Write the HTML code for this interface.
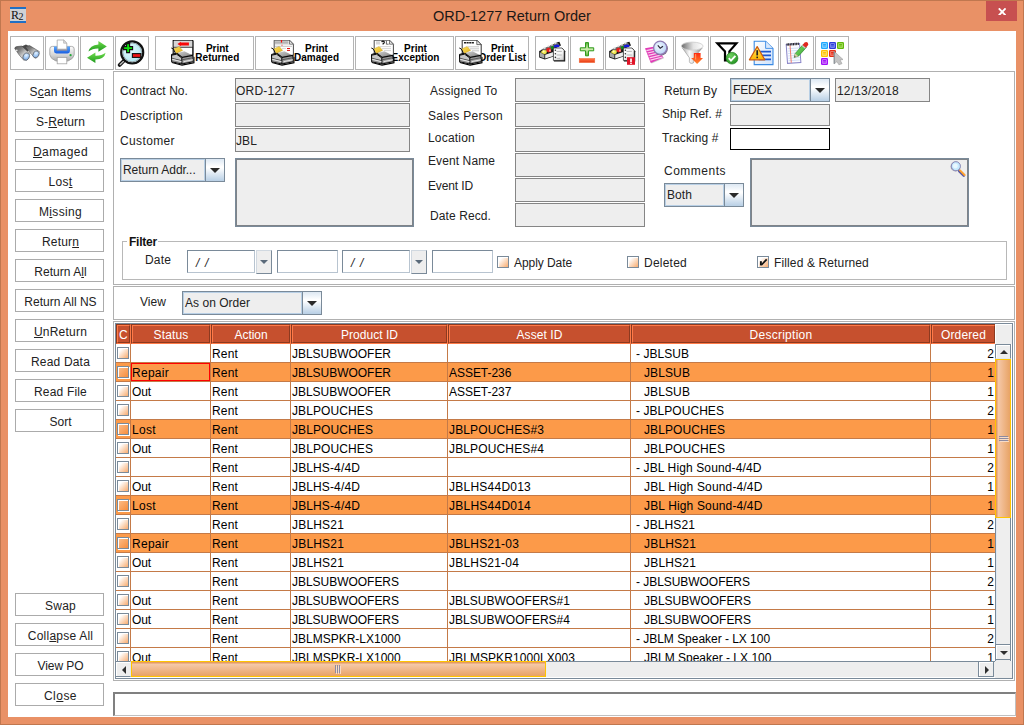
<!DOCTYPE html>
<html><head><meta charset="utf-8"><title>ORD-1277 Return Order</title>
<style>
*{box-sizing:border-box;margin:0;padding:0}
html,body{width:1024px;height:725px;overflow:hidden}
body{background:#E99166;font-family:"Liberation Sans",sans-serif;font-size:12px;color:#222;position:relative}
div,span,svg{position:absolute}
.t{white-space:pre;line-height:14px;height:14px;font-size:12px}
.btn{background:#fff;border:1px solid #ababab}
.tb{background:#fff;border:1px solid #b4b4b4}
.fld{background:#eee;border:1px solid #858585}
.ta{background:#eee;border:1px solid #7a8a99;box-shadow:inset 0 0 0 1px #7f8388}
.cb{border:1px solid #7a8a99;background:#eee}
.cb i{position:absolute;left:0;top:0;bottom:0;right:19px;border:1px solid #b8cfe5;font-style:normal}
.cb b{position:absolute;right:0;top:0;bottom:0;width:19px;border-left:1px solid #7a8a99;background:linear-gradient(#dde8f3 0%,#fff 35%,#fff 40%,#b8cfe5 100%)}
.cb b:after{content:"";position:absolute;left:4px;top:9px;border:5px solid transparent;border-top:5px solid #2a2a2a;border-bottom:0}
.ck{width:12px;height:12px;border:1px solid #7a8a99;background:linear-gradient(135deg,#fff 0%,#fff 22%,#f8ab6e 100%);box-shadow:inset 1px 1px 0 #fff,1px 1px 0 #fff}
.ck.o{background:linear-gradient(135deg,#fdc08e 0%,#f78d3c 100%)}
.hc{background:#c6502e;border-left:1px solid #8c3a20;border-top:1px solid #8c3a20;border-right:1px solid #ff7a48;border-bottom:1px solid #ff7a48}
.hc:before{content:"";position:absolute;left:0;top:0;right:0;bottom:0;border-left:1px solid #ff7a48;border-top:1px solid #ff7a48;border-right:1px solid #8c3a20;border-bottom:1px solid #8c3a20}
.ht{color:#fff}
.u{text-decoration:underline}
</style></head><body>
<div style="left:0px;top:0px;width:1024px;height:725px;border:1px solid #c0774f"></div>
<span id="title" style="left:433px;top:6px;font-size:14.5px;line-height:20px;white-space:pre;color:#1c1816">ORD-1277 Return Order</span>
<div style="left:10px;top:7px;width:16px;height:16px;background:#cfd2d6;border-top:2px solid #1f6fc4;border-bottom:2px solid #1f6fc4"></div>
<span style="left:11px;top:8px;font:12px/14px 'Liberation Serif',serif;color:#111;letter-spacing:-0.5px">R<span style="position:relative;top:1px;font-size:10px">2</span></span>
<div style="left:986px;top:1px;width:31px;height:20px;background:#c75050"></div>
<svg style="left:998px;top:7.6px" width="8.4" height="7.8" viewBox="0 0 8.4 7.8"><path d="M0.8 0.4L7.6 7.4M7.6 0.4L0.8 7.4" stroke="#fff" stroke-width="1.9"/></svg>
<div style="left:8px;top:31px;width:1008px;height:686px;background:#fff"></div>
<div class="tb" style="left:10px;top:36px;width:34px;height:34px;"></div>
<div class="tb" style="left:45px;top:36px;width:34px;height:34px;"></div>
<div class="tb" style="left:80px;top:36px;width:34px;height:34px;"></div>
<div class="tb" style="left:115px;top:36px;width:34px;height:34px;"></div>
<div class="tb" style="left:155px;top:36px;width:99px;height:34px;"></div>
<div class="tb" style="left:255px;top:36px;width:99px;height:34px;"></div>
<div class="tb" style="left:355px;top:36px;width:99px;height:34px;"></div>
<div class="tb" style="left:455px;top:36px;width:74px;height:34px;"></div>
<div class="tb" style="left:535px;top:36px;width:34px;height:34px;"></div>
<div class="tb" style="left:570px;top:36px;width:34px;height:34px;"></div>
<div class="tb" style="left:605px;top:36px;width:34px;height:34px;"></div>
<div class="tb" style="left:640px;top:36px;width:34px;height:34px;"></div>
<div class="tb" style="left:675px;top:36px;width:34px;height:34px;"></div>
<div class="tb" style="left:710px;top:36px;width:34px;height:34px;"></div>
<div class="tb" style="left:745px;top:36px;width:34px;height:34px;"></div>
<div class="tb" style="left:780px;top:36px;width:34px;height:34px;"></div>
<div class="tb" style="left:815px;top:36px;width:34px;height:34px;"></div>
<span class="t" style="left:177.3px;top:44px;width:80px;text-align:center;font-weight:bold;font-size:10px;line-height:9px;height:auto;color:#000">Print<br>Returned</span>
<span class="t" style="left:276.5px;top:44px;width:80px;text-align:center;font-weight:bold;font-size:10px;line-height:9px;height:auto;color:#000">Print<br>Damaged</span>
<span class="t" style="left:375.5px;top:44px;width:80px;text-align:center;font-weight:bold;font-size:10px;line-height:9px;height:auto;color:#000">Print<br>Exception</span>
<span class="t" style="left:462.3px;top:44px;width:80px;text-align:center;font-weight:bold;font-size:10px;line-height:9px;height:auto;color:#000">Print<br>Order List</span>
<svg width="0" height="0" style="left:0;top:0"><defs>
<linearGradient id="gBar" x1="0" y1="0" x2="1" y2="1"><stop offset="0" stop-color="#555"/><stop offset=".3" stop-color="#7c7c7c"/><stop offset=".55" stop-color="#c4c4c4"/><stop offset=".78" stop-color="#f2f2f2"/><stop offset="1" stop-color="#a0a0a0"/></linearGradient>
<radialGradient id="gLens" cx=".4" cy=".35" r=".7"><stop offset="0" stop-color="#e8f4ff"/><stop offset=".6" stop-color="#9cc4f2"/><stop offset="1" stop-color="#6a94d0"/></radialGradient>
<linearGradient id="gGreen" x1="0" y1="0" x2="0" y2="1"><stop offset="0" stop-color="#6fdc4c"/><stop offset="1" stop-color="#1d9a1d"/></linearGradient>
<linearGradient id="gPrn" x1="0" y1="0" x2="0" y2="1"><stop offset="0" stop-color="#fdfdfd"/><stop offset=".6" stop-color="#d4d4d4"/><stop offset="1" stop-color="#a8a8a8"/></linearGradient>
<linearGradient id="gBlue" x1="0" y1="0" x2="0" y2="1"><stop offset="0" stop-color="#5aa8ff"/><stop offset="1" stop-color="#1b5fe0"/></linearGradient>
<radialGradient id="gGlass" cx=".4" cy=".4" r=".7"><stop offset="0" stop-color="#e4fbff"/><stop offset="1" stop-color="#a8e2ee"/></radialGradient>
<linearGradient id="gTop" x1="0" y1="0" x2="1" y2="1"><stop offset="0" stop-color="#d4d4d4"/><stop offset="1" stop-color="#787878"/></linearGradient>
<linearGradient id="gFront" x1="0" y1="0" x2="0" y2="1"><stop offset="0" stop-color="#d8d8d8"/><stop offset="1" stop-color="#7c7c7c"/></linearGradient>
<linearGradient id="gPlus" x1="0" y1="0" x2="0" y2="1"><stop offset="0" stop-color="#58b038"/><stop offset=".5" stop-color="#d0eeb0"/><stop offset="1" stop-color="#58b038"/></linearGradient>
<linearGradient id="gMinus" x1="0" y1="0" x2="0" y2="1"><stop offset="0" stop-color="#ff7a4a"/><stop offset="1" stop-color="#e83810"/></linearGradient>
<linearGradient id="gFun" x1="0" y1="0" x2="1" y2="0"><stop offset="0" stop-color="#a8a8a8"/><stop offset=".35" stop-color="#fbfbfb"/><stop offset=".6" stop-color="#d8d8d8"/><stop offset="1" stop-color="#8e8e8e"/></linearGradient>
<linearGradient id="gFunTop" x1="0" y1="0" x2="1" y2="0"><stop offset="0" stop-color="#6a6a6a"/><stop offset=".55" stop-color="#e4e4e4"/><stop offset="1" stop-color="#fff"/></linearGradient>
<linearGradient id="gArr" x1="0" y1="0" x2="0" y2="1"><stop offset="0" stop-color="#ff2a10"/><stop offset="1" stop-color="#ff8a30"/></linearGradient>
<radialGradient id="gChk" cx=".4" cy=".3" r=".8"><stop offset="0" stop-color="#6fd060"/><stop offset="1" stop-color="#1c8c1c"/></radialGradient>
<radialGradient id="gClock" cx=".4" cy=".4" r=".7"><stop offset="0" stop-color="#f2f8ff"/><stop offset="1" stop-color="#b4d0f4"/></radialGradient>
<linearGradient id="gDoc" x1="0" y1="0" x2="1" y2="1"><stop offset="0" stop-color="#fff"/><stop offset="1" stop-color="#cfe2fa"/></linearGradient>
<linearGradient id="gWarn" x1="0" y1="0" x2="0" y2="1"><stop offset="0" stop-color="#ffe860"/><stop offset="1" stop-color="#ffb400"/></linearGradient>
<linearGradient id="gPen" x1="0" y1="0" x2="1" y2="1"><stop offset="0" stop-color="#8ae870"/><stop offset="1" stop-color="#2c9c2c"/></linearGradient>
<linearGradient id="gPaper" x1="0" y1="0" x2="1" y2="1"><stop offset="0" stop-color="#fff"/><stop offset=".6" stop-color="#f4f4f4"/><stop offset="1" stop-color="#c4c4c4"/></linearGradient>
<linearGradient id="gYel" x1="0" y1="0" x2="1" y2="1"><stop offset="0" stop-color="#f9e060"/><stop offset="1" stop-color="#e8b41c"/></linearGradient>
</defs></svg>
<svg style="left:10px;top:36px" width="34" height="34" viewBox="0 0 34 34">
<path d="M11.4 10.4L16 8.6L21.4 11.4L17.4 15.6Z" fill="#4a4a4a"/>
<path d="M4.8 12.6Q4.6 11 6.6 10.6L12 10L19.6 17.8L14 24.4Q9 19.6 4.8 12.6Z" fill="url(#gBar)" stroke="#3c3c3c" stroke-width=".5"/>
<path d="M15 10.6L19.6 9.6L29.4 15.6L25.6 22.2Q20 17.6 15 10.6Z" fill="url(#gBar)" stroke="#3c3c3c" stroke-width=".5"/>
<ellipse cx="16.2" cy="20.6" rx="3.1" ry="3.9" fill="url(#gLens)" stroke="#5a5a5a" stroke-width=".7" transform="rotate(30 16.2 20.6)"/>
<ellipse cx="26" cy="18.4" rx="2.9" ry="3.7" fill="url(#gLens)" stroke="#5a5a5a" stroke-width=".7" transform="rotate(30 26 18.4)"/>
<circle cx="6.8" cy="14.4" r=".8" fill="#eee"/></svg>
<svg style="left:45px;top:36px" width="34" height="34" viewBox="0 0 34 34">
<path d="M4.8 13Q4.8 10.4 7.4 10.4L26.6 10.4Q29.2 10.4 29.2 13L29.2 18.8Q28.6 22.8 23 25L11 25Q5.4 22.8 4.8 18.8Z" fill="url(#gPrn)" stroke="#9c9c9c" stroke-width=".8"/>
<path d="M9 10.4L25 10.4L25 15Q25 17.4 22.6 17.4L11.4 17.4Q9 17.4 9 15Z" fill="url(#gBlue)"/>
<rect x="11.8" y="12.6" width="10.4" height="2.2" fill="#8c8ca4"/>
<path d="M12.2 4L18.6 4L21.8 7.2L21.8 13.2L12.2 13.2Z" fill="#fff" stroke="#a4a4a4" stroke-width=".8"/>
<path d="M18.6 4L18.6 7.2L21.8 7.2Z" fill="#e0e0e0" stroke="#a4a4a4" stroke-width=".6"/>
<rect x="12.2" y="21.4" width="9.6" height="6.4" fill="#fff" stroke="#a4a4a4" stroke-width=".8"/>
<circle cx="25.6" cy="19.2" r="1.1" fill="#22a838"/></svg>
<svg style="left:80px;top:36px" width="34" height="34" viewBox="0 0 34 34">
<path d="M8.4 15.6Q9.6 9.4 18.4 8.4L18.4 5L26.8 10.6L18.4 15.8L18.4 12.4Q12.6 12.2 8.4 15.6Z" fill="url(#gGreen)"/>
<path d="M25.6 16.8Q24.6 23 15.4 23.6L15.4 27L7 21.8L15.4 16.4L15.4 19.8Q21.4 20 25.6 16.8Z" fill="url(#gGreen)"/></svg>
<svg style="left:115px;top:36px" width="34" height="34" viewBox="0 0 34 34">
<path d="M8.6 25L4.6 29" stroke="#111" stroke-width="3.8" stroke-linecap="round"/>
<path d="M8.4 25.4L5.2 28.4" stroke="#bdbdbd" stroke-width="1.4" stroke-linecap="round"/>
<circle cx="17.7" cy="16.9" r="11" fill="#111"/><circle cx="17.2" cy="16.4" r="11" fill="url(#gGlass)" stroke="#111" stroke-width="2.2"/>
<circle cx="17.2" cy="16.4" r="9.4" fill="none" stroke="#9aa4a8" stroke-width="1"/>
<path d="M11.6 7.6h3v3h3v3h-3v3h-3v-3h-3v-3h3z" fill="#0fe20f" stroke="#111" stroke-width="1.1"/>
<rect x="17.4" y="17.6" width="8.4" height="3.8" fill="#ee1414" stroke="#111" stroke-width="1.1"/></svg>
<svg style="left:171px;top:40px" width="26" height="28" viewBox="0 0 26 28"><rect x="2.2" y=".2" width="19.6" height="15" fill="#fff" stroke="#000" stroke-width="1.1"/><rect x="2.8" y=".9" width="18.4" height="6" fill="#d6d6d6"/><path d="M6.5 4L9.8 1.8L9.8 2.6L17.9 2.6L17.9 5.4L9.8 5.4L9.8 6.2Z" fill="#f80808"/><path d="M2.4 7.3h19.2" stroke="#111" stroke-width=".8"/><path d="M22.3 1v14" stroke="#333" stroke-width=".7"/><g>
 <path d="M0.8 22L10.8 24.6L22.5 22.2L22.5 16.4L23.5 17L23.5 23.2L11 25.8L0.8 23Z" fill="#000"/>
 <path d="M5.8 13L13.4 11.2L21.8 15.4L11.2 17.4Z" fill="url(#gTop)"/>
 <path d="M0.5 15L5.6 14L10.8 17.6L10.8 24L0.7 21.8Z" fill="#c6c6c6"/>
 <path d="M10.8 17.6L21.9 15.5L22.2 21.8L10.8 24Z" fill="#9a9a9a"/>
 <path d="M0.4 14.5L5.8 13.1L11.2 17.4L21.9 15.4M0.5 14.6L0.7 21.8L10.8 24L22.2 21.8L21.9 15.4M10.8 17.8L10.8 24" stroke="#0a0a0a" stroke-width="1.1" fill="none" stroke-linejoin="round"/>
 <path d="M0.6 15.2L5.6 14.2L10.6 17.8" stroke="#0a0a0a" stroke-width="1" fill="none"/>
 <path d="M1 18.3L10.6 20.7" stroke="#2a2a2a" stroke-width=".8"/>
 <path d="M1 19.2L10.6 21.6" stroke="#f4f4f4" stroke-width=".7"/>
 <path d="M1 20.6L10.6 22.9" stroke="#555" stroke-width=".6"/>
 <path d="M11 19.8L22 17.7" stroke="#4a4a4a" stroke-width=".8"/>
 <path d="M12.6 21.6L22 19.8" stroke="#f0f0f0" stroke-width=".9"/>
 <path d="M2.6 9L8.2 6.4L11.6 10.4L5.4 13.2Z" fill="url(#gYel)" stroke="#b8901c" stroke-width=".4"/>
 <path d="M0.3 8L2.4 9L4.4 13.4" fill="none" stroke="#111" stroke-width="1"/>
</g></svg>
<svg style="left:271px;top:40px" width="26" height="28" viewBox="0 0 26 28"><path d="M3.2 .2L18.5 .2L22.4 4.2L22.4 15.4L3.2 15.4Z" fill="#fff" stroke="#4c4c4c" stroke-width="1"/><path d="M18.5 .2L18.5 4.2L22.4 4.2Z" fill="#e8e8e8" stroke="#4c4c4c" stroke-width=".7"/><rect x="3.9" y="1.2" width="13.6" height="2.6" fill="#b4b4b4"/><path d="M4 4.6h14" stroke="#ccc" stroke-width=".6"/><path d="M10.5 0v2.6" stroke="#f01010" stroke-width="1.2"/><circle cx="11" cy="5.2" r=".7" fill="#f06a6a"/><path d="M4 6.3h17" stroke="#9a9a9a" stroke-width=".6"/><path d="M16 8.5h3M16 10.4h3" stroke="#e01010" stroke-width="1"/><path d="M11 8.4h4" stroke="#bbb" stroke-width=".6"/><g>
 <path d="M0.8 22L10.8 24.6L22.5 22.2L22.5 16.4L23.5 17L23.5 23.2L11 25.8L0.8 23Z" fill="#000"/>
 <path d="M5.8 13L13.4 11.2L21.8 15.4L11.2 17.4Z" fill="url(#gTop)"/>
 <path d="M0.5 15L5.6 14L10.8 17.6L10.8 24L0.7 21.8Z" fill="#c6c6c6"/>
 <path d="M10.8 17.6L21.9 15.5L22.2 21.8L10.8 24Z" fill="#9a9a9a"/>
 <path d="M0.4 14.5L5.8 13.1L11.2 17.4L21.9 15.4M0.5 14.6L0.7 21.8L10.8 24L22.2 21.8L21.9 15.4M10.8 17.8L10.8 24" stroke="#0a0a0a" stroke-width="1.1" fill="none" stroke-linejoin="round"/>
 <path d="M0.6 15.2L5.6 14.2L10.6 17.8" stroke="#0a0a0a" stroke-width="1" fill="none"/>
 <path d="M1 18.3L10.6 20.7" stroke="#2a2a2a" stroke-width=".8"/>
 <path d="M1 19.2L10.6 21.6" stroke="#f4f4f4" stroke-width=".7"/>
 <path d="M1 20.6L10.6 22.9" stroke="#555" stroke-width=".6"/>
 <path d="M11 19.8L22 17.7" stroke="#4a4a4a" stroke-width=".8"/>
 <path d="M12.6 21.6L22 19.8" stroke="#f0f0f0" stroke-width=".9"/>
 <path d="M2.6 9L8.2 6.4L11.6 10.4L5.4 13.2Z" fill="url(#gYel)" stroke="#b8901c" stroke-width=".4"/>
 <path d="M0.3 8L2.4 9L4.4 13.4" fill="none" stroke="#111" stroke-width="1"/>
</g></svg>
<svg style="left:371px;top:40px" width="26" height="28" viewBox="0 0 26 28"><path d="M3.2 .2L18.5 .2L22.4 4.2L22.4 15.4L3.2 15.4Z" fill="#fff" stroke="#4c4c4c" stroke-width="1"/><path d="M18.5 .2L18.5 4.2L22.4 4.2Z" fill="#e8e8e8" stroke="#4c4c4c" stroke-width=".7"/><path d="M6 1.2v3.4M8 1.2v3.4" stroke="#b4b4b4" stroke-width="1.1"/><path d="M10.6 2Q12 .4 13.3 1.8Q13.6 3 12.1 3.7L12.1 4.4" fill="none" stroke="#111" stroke-width="1.2"/><path d="M15.4 .8v3.4h2.2" fill="none" stroke="#555" stroke-width=".9"/><path d="M9 6.6h11M11 8.6h9M13 10.6h7" stroke="#c4c4c4" stroke-width=".7"/><g>
 <path d="M0.8 22L10.8 24.6L22.5 22.2L22.5 16.4L23.5 17L23.5 23.2L11 25.8L0.8 23Z" fill="#000"/>
 <path d="M5.8 13L13.4 11.2L21.8 15.4L11.2 17.4Z" fill="url(#gTop)"/>
 <path d="M0.5 15L5.6 14L10.8 17.6L10.8 24L0.7 21.8Z" fill="#c6c6c6"/>
 <path d="M10.8 17.6L21.9 15.5L22.2 21.8L10.8 24Z" fill="#9a9a9a"/>
 <path d="M0.4 14.5L5.8 13.1L11.2 17.4L21.9 15.4M0.5 14.6L0.7 21.8L10.8 24L22.2 21.8L21.9 15.4M10.8 17.8L10.8 24" stroke="#0a0a0a" stroke-width="1.1" fill="none" stroke-linejoin="round"/>
 <path d="M0.6 15.2L5.6 14.2L10.6 17.8" stroke="#0a0a0a" stroke-width="1" fill="none"/>
 <path d="M1 18.3L10.6 20.7" stroke="#2a2a2a" stroke-width=".8"/>
 <path d="M1 19.2L10.6 21.6" stroke="#f4f4f4" stroke-width=".7"/>
 <path d="M1 20.6L10.6 22.9" stroke="#555" stroke-width=".6"/>
 <path d="M11 19.8L22 17.7" stroke="#4a4a4a" stroke-width=".8"/>
 <path d="M12.6 21.6L22 19.8" stroke="#f0f0f0" stroke-width=".9"/>
 <path d="M2.6 9L8.2 6.4L11.6 10.4L5.4 13.2Z" fill="url(#gYel)" stroke="#b8901c" stroke-width=".4"/>
 <path d="M0.3 8L2.4 9L4.4 13.4" fill="none" stroke="#111" stroke-width="1"/>
</g></svg>
<svg style="left:459px;top:40px" width="26" height="28" viewBox="0 0 26 28"><path d="M3.2 .2L17.8 .2L22.2 4.6L22.2 15.4L3.2 15.4Z" fill="#fff" stroke="#333" stroke-width="1"/><path d="M17.8 .2L17.8 4.6L22.2 4.6Z" fill="#e8e8e8" stroke="#333" stroke-width=".7"/><path d="M5 2.8h10.4" stroke="#222" stroke-width="1.6" stroke-dasharray="2.1 .5"/><path d="M9 6.8h11M11 8.8h9M13 10.8h7" stroke="#b8b8b8" stroke-width=".8"/><g>
 <path d="M0.8 22L10.8 24.6L22.5 22.2L22.5 16.4L23.5 17L23.5 23.2L11 25.8L0.8 23Z" fill="#000"/>
 <path d="M5.8 13L13.4 11.2L21.8 15.4L11.2 17.4Z" fill="url(#gTop)"/>
 <path d="M0.5 15L5.6 14L10.8 17.6L10.8 24L0.7 21.8Z" fill="#c6c6c6"/>
 <path d="M10.8 17.6L21.9 15.5L22.2 21.8L10.8 24Z" fill="#9a9a9a"/>
 <path d="M0.4 14.5L5.8 13.1L11.2 17.4L21.9 15.4M0.5 14.6L0.7 21.8L10.8 24L22.2 21.8L21.9 15.4M10.8 17.8L10.8 24" stroke="#0a0a0a" stroke-width="1.1" fill="none" stroke-linejoin="round"/>
 <path d="M0.6 15.2L5.6 14.2L10.6 17.8" stroke="#0a0a0a" stroke-width="1" fill="none"/>
 <path d="M1 18.3L10.6 20.7" stroke="#2a2a2a" stroke-width=".8"/>
 <path d="M1 19.2L10.6 21.6" stroke="#f4f4f4" stroke-width=".7"/>
 <path d="M1 20.6L10.6 22.9" stroke="#555" stroke-width=".6"/>
 <path d="M11 19.8L22 17.7" stroke="#4a4a4a" stroke-width=".8"/>
 <path d="M12.6 21.6L22 19.8" stroke="#f0f0f0" stroke-width=".9"/>
 <path d="M2.6 9L8.2 6.4L11.6 10.4L5.4 13.2Z" fill="url(#gYel)" stroke="#b8901c" stroke-width=".4"/>
 <path d="M0.3 8L2.4 9L4.4 13.4" fill="none" stroke="#111" stroke-width="1"/>
</g></svg>
<svg style="left:535px;top:36px" width="34" height="34" viewBox="0 0 34 34"><g>
 <path d="M4.2 15L10 12.4L22.4 6.2L24.4 5.8L26 9.6L18.6 13L18.6 20.6L9.8 23.6L4.2 21.4Z" fill="#161616"/>
 <path d="M6.2 13.6L22.6 6.4L24.8 9.6L9.4 16.6Z" fill="#6a6a6a"/>
 <path d="M8.8 12.6l1.6-.7M12.6 10.8l1.6-.7M16.2 9.2l1.6-.7M19.8 7.6l1.6-.7" stroke="#d8d8d8" stroke-width="1.6"/>
 <path d="M5 16.2L9.4 18.8L9.4 22.6L5 20.8Z" fill="#a8a8a8"/>
 <path d="M10.2 18.8L18.4 16L18.4 20L10.2 22.6Z" fill="#ececec"/>
 <path d="M6.2 15.6L8.4 14L11.8 14.6L11.6 17.2L9.6 18.2L6.4 17Z" fill="#f0e850"/><circle cx="8.6" cy="15.4" r="1" fill="#fffcc0"/>
 <path d="M11.2 13L13.4 11.6L16 12.4L16.2 15.6L13.4 16.4L11.6 15.2Z" fill="#e81c1c"/><rect x="14" y="13.6" width="1.8" height="2" fill="#ff9a9a"/>
 <path d="M15.6 11L17.6 10L19 10.6L19 13L16.4 13.4Z" fill="#128a22"/>
 <path d="M18.8 9.4L21.4 8.4L24.4 9L24.2 11L19.2 11.6Z" fill="#1418e0"/>
 <path d="M18.9 12.6L27.6 12.6L30.2 15.2L30.2 25.4L18.9 25.4Z" fill="#111"/>
 <path d="M18.4 12L27 12L29.2 14.4L29.2 24.4L18.4 24.4Z" fill="url(#gPaper)" stroke="#1c1c1c" stroke-width=".7"/>
 <path d="M21.6 15.4h5.2M21.6 19h5.2M21.6 22.4h3.4" stroke="#a8a8a8" stroke-width=".8"/>
 <circle cx="20.4" cy="14.2" r=".8" fill="#333"/><circle cx="20.4" cy="17.7" r=".8" fill="#333"/><circle cx="20.4" cy="21.4" r=".8" fill="#333"/>
</g></svg>
<svg style="left:570px;top:36px" width="34" height="34" viewBox="0 0 34 34">
<path d="M15.5 6.6h3v5.2h5.2v3h-5.2v5h-3v-5h-5.2v-3h5.2z" fill="url(#gPlus)" stroke="#2f9a1c" stroke-width="1"/>
<rect x="9.2" y="22.4" width="15.6" height="4.2" fill="url(#gMinus)" stroke="#f06a3a" stroke-width=".5"/></svg>
<svg style="left:605px;top:36px" width="34" height="34" viewBox="0 0 34 34"><g>
 <path d="M4.2 15L10 12.4L22.4 6.2L24.4 5.8L26 9.6L18.6 13L18.6 20.6L9.8 23.6L4.2 21.4Z" fill="#161616"/>
 <path d="M6.2 13.6L22.6 6.4L24.8 9.6L9.4 16.6Z" fill="#6a6a6a"/>
 <path d="M8.8 12.6l1.6-.7M12.6 10.8l1.6-.7M16.2 9.2l1.6-.7M19.8 7.6l1.6-.7" stroke="#d8d8d8" stroke-width="1.6"/>
 <path d="M5 16.2L9.4 18.8L9.4 22.6L5 20.8Z" fill="#a8a8a8"/>
 <path d="M10.2 18.8L18.4 16L18.4 20L10.2 22.6Z" fill="#ececec"/>
 <path d="M6.2 15.6L8.4 14L11.8 14.6L11.6 17.2L9.6 18.2L6.4 17Z" fill="#f0e850"/><circle cx="8.6" cy="15.4" r="1" fill="#fffcc0"/>
 <path d="M11.2 13L13.4 11.6L16 12.4L16.2 15.6L13.4 16.4L11.6 15.2Z" fill="#e81c1c"/><rect x="14" y="13.6" width="1.8" height="2" fill="#ff9a9a"/>
 <path d="M15.6 11L17.6 10L19 10.6L19 13L16.4 13.4Z" fill="#128a22"/>
 <path d="M18.8 9.4L21.4 8.4L24.4 9L24.2 11L19.2 11.6Z" fill="#1418e0"/>
 <path d="M18.9 12.6L27.6 12.6L30.2 15.2L30.2 25.4L18.9 25.4Z" fill="#111"/>
 <path d="M18.4 12L27 12L29.2 14.4L29.2 24.4L18.4 24.4Z" fill="url(#gPaper)" stroke="#1c1c1c" stroke-width=".7"/>
 <path d="M21.6 15.4h5.2M21.6 19h5.2M21.6 22.4h3.4" stroke="#a8a8a8" stroke-width=".8"/>
 <circle cx="20.4" cy="14.2" r=".8" fill="#333"/><circle cx="20.4" cy="17.7" r=".8" fill="#333"/><circle cx="20.4" cy="21.4" r=".8" fill="#333"/>
</g><rect x="22" y="21.2" width="8" height="7.6" fill="#e01428"/><path d="M26 22.4v3.6" stroke="#fff" stroke-width="1.7"/><rect x="25.2" y="26.6" width="1.6" height="1.4" fill="#fff"/></svg>
<svg style="left:640px;top:36px" width="34" height="34" viewBox="0 0 34 34">
<path d="M5.6 13L17 11L24 22.2L11.6 27.4Z" fill="#8a8a8a" opacity=".45"/><path d="M5 12.2L16.4 10.2L23.4 21.4L10.8 27Z" fill="#e23cb8"/>
<path d="M6.4 14.6L17.6 12.2M7.6 17L19 14.4M8.6 19.4L20.2 16.6M9.6 21.8L21.6 18.8M10.4 24.2L22.6 21" stroke="#fbd0ee" stroke-width="1.25"/>
<circle cx="21" cy="12.6" r="6.9" fill="#4a3a5a" opacity=".75"/>
<circle cx="20.2" cy="11.8" r="6.6" fill="url(#gClock)" stroke="#8e7cb4" stroke-width="1.3"/>
<path d="M17.8 9.4L20.2 12.2L23 10.2" fill="none" stroke="#2a2a3a" stroke-width="1.2"/></svg>
<svg style="left:675px;top:36px" width="34" height="34" viewBox="0 0 34 34">
<path d="M7.4 12L14.4 21.8L14.4 25.8Q14.6 27.4 16.6 27.4Q18.8 27.4 18.8 25.8L18.8 21.8L27.2 12Z" fill="url(#gFun)" stroke="#909090" stroke-width=".6"/>
<ellipse cx="17.2" cy="10.1" rx="10.9" ry="4" fill="url(#gFunTop)" stroke="#d0d0d0" stroke-width=".9"/>
<path d="M18.8 17.1h6.8v5h2.4L22.1 28L16.1 22.1h2.7z" fill="url(#gArr)"/>
<path d="M20.6 18v5.4" stroke="#ffb070" stroke-width="1.2" opacity=".7"/></svg>
<svg style="left:710px;top:36px" width="34" height="34" viewBox="0 0 34 34">
<path d="M7.4 7.4L26.4 7.4L19.4 15.4L19.4 24.4L15 24.4L15 15.4Z" fill="#fff" stroke="#000" stroke-width="2.2" stroke-linejoin="miter"/>
<circle cx="22" cy="22.2" r="5.9" fill="url(#gChk)" stroke="#1a7a1a" stroke-width=".6"/>
<path d="M18.8 22.2L21 24.6L25.4 19.8" fill="none" stroke="#fff" stroke-width="1.9"/></svg>
<svg style="left:745px;top:36px" width="34" height="34" viewBox="0 0 34 34">
<path d="M9.2 5.2L20.6 5.2L28 12.4L28 28.6L9.2 28.6Z" fill="url(#gDoc)" stroke="#3a8ae4" stroke-width="1.1"/>
<path d="M20.6 5.2L20.6 12.4L28 12.4" fill="#d8e8fc" stroke="#3a8ae4" stroke-width=".9"/>
<path d="M13.6 15.6h12.4M13.6 19.4h12.4M13.6 23.4h12.4" stroke="#1c58d0" stroke-width="1.7"/>
<path d="M12.2 10.6L4.4 23.8L19.8 23.8Z" fill="url(#gWarn)" stroke="#cc5a10" stroke-width="1.2" stroke-linejoin="round"/>
<path d="M12.2 14.2v5.2" stroke="#222" stroke-width="1.7"/><rect x="11.4" y="20.6" width="1.6" height="1.6" fill="#222"/></svg>
<svg style="left:780px;top:36px" width="34" height="34" viewBox="0 0 34 34">
<g transform="rotate(-4 13 17)"><rect x="6.8" y="8" width="13.4" height="19" fill="#fcfcff" stroke="#8a86c8" stroke-width="1"/>
<path d="M8 12.4h11.4M8 14.8h11.4M8 17.2h11.4M8 19.6h11.4M8 22h11.4M8 24.4h11.4" stroke="#b8d0f4" stroke-width=".6"/>
<path d="M10.6 9v17.6" stroke="#f07060" stroke-width=".9"/>
<path d="M7.2 8.2h12.8" stroke="#222" stroke-width="2.4" stroke-dasharray="1 .6"/></g>
<path d="M14.2 21.4L15.2 17.6L23 8.6L26.4 11.4L18.4 20.2Z" fill="url(#gPen)" stroke="#2a7a2a" stroke-width=".6"/>
<path d="M14.2 21.4L15.2 17.6L18.4 20.2Z" fill="#d8c8a8"/><path d="M14.2 21.4L14.6 19.8L15.8 20.8Z" fill="#444"/>
<path d="M22.4 9.2L24.6 6.6Q26.4 5.2 27.8 6.8Q29 8.6 27.6 9.8L25.6 12Z" fill="#e02820"/>
<path d="M22.2 9.6L25.4 12.2" stroke="#c8c8c8" stroke-width="1.3"/></svg>
<svg style="left:815px;top:36px" width="34" height="34" viewBox="0 0 34 34"><rect x="6" y="6" width="7" height="7" rx="1.3" fill="#1fa8ff"/><rect x="7.3" y="7.3" width="4.4" height="4.4" fill="#a4e0ff"/><rect x="8.1" y="8.1" width="2.8" height="2.8" fill="#4cb8ff"/><rect x="8.1" y="8.1" width="2.8" height=".9" fill="#1fa8ff"/><rect x="14" y="6" width="7" height="7" rx="1.3" fill="#2c3cd8"/><rect x="15.3" y="7.3" width="4.4" height="4.4" fill="#98a4f4"/><rect x="16.1" y="8.1" width="2.8" height="2.8" fill="#4c64e8"/><rect x="16.1" y="8.1" width="2.8" height=".9" fill="#2c3cd8"/><rect x="22" y="6" width="7" height="7" rx="1.3" fill="#62b80c"/><rect x="23.3" y="7.3" width="4.4" height="4.4" fill="#b8e878"/><rect x="24.1" y="8.1" width="2.8" height="2.8" fill="#86cc30"/><rect x="24.1" y="8.1" width="2.8" height=".9" fill="#62b80c"/><rect x="6" y="14" width="7" height="7" rx="1.3" fill="#ffc400"/><rect x="7.3" y="15.3" width="4.4" height="4.4" fill="#ffe88a"/><rect x="8.1" y="16.1" width="2.8" height="2.8" fill="#ffd030"/><rect x="8.1" y="16.1" width="2.8" height=".9" fill="#ffc400"/><rect x="14" y="14" width="7" height="7" rx="1.3" fill="#e42c14"/><rect x="15.3" y="15.3" width="4.4" height="4.4" fill="#f8988a"/><rect x="16.1" y="16.1" width="2.8" height="2.8" fill="#f04c38"/><rect x="16.1" y="16.1" width="2.8" height=".9" fill="#e42c14"/><rect x="6" y="22" width="7" height="7" rx="1.3" fill="#a010f8"/><rect x="7.3" y="23.3" width="4.4" height="4.4" fill="#dc98ff"/><rect x="8.1" y="24.1" width="2.8" height="2.8" fill="#b43cf8"/><rect x="8.1" y="24.1" width="2.8" height=".9" fill="#a010f8"/><path d="M19.2 15.4L19.2 27.8L22 25.6L23.9 28.8L27 27.6L25 24L28 23.5Z" fill="#c4c4c4" stroke="#9a9a9a" stroke-width=".6"/><path d="M19.2 15.4L19.2 27.8" stroke="#7c848c" stroke-width=".9"/></svg>
<div class="btn" style="left:15px;top:79px;width:89px;height:23px;"></div>
<span class="t" style="left:16px;top:85px;width:89px;text-align:center;letter-spacing:0.20px;">S<span class="u" style="position:static">c</span>an Items</span>
<div class="btn" style="left:15px;top:109px;width:89px;height:23px;"></div>
<span class="t" style="left:16px;top:115px;width:89px;text-align:center;letter-spacing:0.12px;">S-<span class="u" style="position:static">R</span>eturn</span>
<div class="btn" style="left:15px;top:139px;width:89px;height:23px;"></div>
<span class="t" style="left:16px;top:145px;width:89px;text-align:center;letter-spacing:0.42px;"><span class="u" style="position:static">D</span>amaged</span>
<div class="btn" style="left:15px;top:169px;width:89px;height:23px;"></div>
<span class="t" style="left:16px;top:175px;width:89px;text-align:center;letter-spacing:0.33px;">Los<span class="u" style="position:static">t</span></span>
<div class="btn" style="left:15px;top:199px;width:89px;height:23px;"></div>
<span class="t" style="left:16px;top:205px;width:89px;text-align:center;letter-spacing:0.33px;">M<span class="u" style="position:static">i</span>ssing</span>
<div class="btn" style="left:15px;top:229px;width:89px;height:23px;"></div>
<span class="t" style="left:16px;top:235px;width:89px;text-align:center;letter-spacing:0.16px;">Retur<span class="u" style="position:static">n</span></span>
<div class="btn" style="left:15px;top:259px;width:89px;height:23px;"></div>
<span class="t" style="left:16px;top:265px;width:89px;text-align:center;letter-spacing:0.03px;">Return A<span class="u" style="position:static">l</span>l</span>
<div class="btn" style="left:15px;top:289px;width:89px;height:23px;"></div>
<span class="t" style="left:16px;top:295px;width:89px;text-align:center;letter-spacing:0.02px;">Return All NS</span>
<div class="btn" style="left:15px;top:319px;width:89px;height:23px;"></div>
<span class="t" style="left:16px;top:325px;width:89px;text-align:center;letter-spacing:0.21px;"><span class="u" style="position:static">U</span>nReturn</span>
<div class="btn" style="left:15px;top:349px;width:89px;height:23px;"></div>
<span class="t" style="left:16px;top:355px;width:89px;text-align:center;letter-spacing:0.18px;">Read Data</span>
<div class="btn" style="left:15px;top:379px;width:89px;height:23px;"></div>
<span class="t" style="left:16px;top:385px;width:89px;text-align:center;letter-spacing:0.18px;">Read File</span>
<div class="btn" style="left:15px;top:409px;width:89px;height:23px;"></div>
<span class="t" style="left:16px;top:415px;width:89px;text-align:center;">Sort</span>
<div class="btn" style="left:15px;top:593px;width:89px;height:23px;"></div>
<span class="t" style="left:16px;top:599px;width:89px;text-align:center;letter-spacing:0.25px;">Swap</span>
<div class="btn" style="left:15px;top:623px;width:89px;height:23px;"></div>
<span class="t" style="left:16px;top:629px;width:89px;text-align:center;letter-spacing:0.22px;">Coll<span class="u" style="position:static">a</span>pse All</span>
<div class="btn" style="left:15px;top:653px;width:89px;height:23px;"></div>
<span class="t" style="left:16px;top:659px;width:89px;text-align:center;letter-spacing:-0.10px;">View PO</span>
<div class="btn" style="left:15px;top:683px;width:89px;height:23px;"></div>
<span class="t" style="left:16px;top:689px;width:89px;text-align:center;letter-spacing:0.46px;">Cl<span class="u" style="position:static">o</span>se</span>
<div style="left:113px;top:71px;width:902px;height:214px;border:1px solid #b0b0b0"></div>
<div style="left:113px;top:286px;width:902px;height:34px;border:1px solid #b0b0b0"></div>
<div style="left:113px;top:321px;width:902px;height:360px;border:1px solid #b0b0b0"></div>
<span class="t" style="left:120px;top:84px;letter-spacing:0.05px;">Contract No.</span>
<span class="t" style="left:120px;top:109px;letter-spacing:0.27px;">Description</span>
<span class="t" style="left:120px;top:134px;letter-spacing:0.37px;">Customer</span>
<div class="fld" style="left:235px;top:78px;width:175px;height:24px;"></div>
<div class="fld" style="left:235px;top:103px;width:175px;height:24px;"></div>
<div class="fld" style="left:235px;top:128px;width:175px;height:24px;"></div>
<span class="t" style="left:236px;top:84px;letter-spacing:0.21px;">ORD-1277</span>
<span class="t" style="left:236px;top:134px;letter-spacing:0.11px;">JBL</span>
<div class="cb" style="left:120px;top:158px;width:105px;height:24px;"><i></i><b></b></div>
<span class="t" style="left:123px;top:163px;letter-spacing:-0.05px;">Return Addr...</span>
<div class="ta" style="left:235px;top:158px;width:179px;height:69px;"></div>
<span class="t" style="left:430px;top:84px;letter-spacing:0.21px;">Assigned To</span>
<span class="t" style="left:428px;top:109px;letter-spacing:0.30px;">Sales Person</span>
<span class="t" style="left:428px;top:131px;letter-spacing:0.20px;">Location</span>
<span class="t" style="left:428px;top:154px;letter-spacing:0.10px;">Event Name</span>
<span class="t" style="left:428px;top:179px;letter-spacing:-0.13px;">Event ID</span>
<span class="t" style="left:430px;top:209px;letter-spacing:0.10px;">Date Recd.</span>
<div class="fld" style="left:515px;top:78px;width:130px;height:24px;"></div>
<div class="fld" style="left:515px;top:103px;width:130px;height:24px;"></div>
<div class="fld" style="left:515px;top:128px;width:130px;height:24px;"></div>
<div class="fld" style="left:515px;top:153px;width:130px;height:24px;"></div>
<div class="fld" style="left:515px;top:178px;width:130px;height:24px;"></div>
<div class="fld" style="left:515px;top:203px;width:130px;height:24px;"></div>
<span class="t" style="left:664px;top:84px;letter-spacing:-0.04px;">Return By</span>
<span class="t" style="left:662px;top:107px;letter-spacing:0.06px;">Ship Ref. #</span>
<span class="t" style="left:662px;top:131px;letter-spacing:0.10px;">Tracking #</span>
<div class="cb" style="left:730px;top:78px;width:100px;height:24px;"><i></i><b></b></div>
<span class="t" style="left:733px;top:83px;letter-spacing:-0.20px;">FEDEX</span>
<div class="fld" style="left:835px;top:78px;width:95px;height:24px;"></div>
<span class="t" style="left:837px;top:84px;letter-spacing:0.19px;">12/13/2018</span>
<div class="fld" style="left:730px;top:104px;width:100px;height:22px;"></div>
<div style="left:730px;top:128px;width:100px;height:22px;background:#fff;border:1px solid #000"></div>
<span class="t" style="left:664px;top:164px;letter-spacing:0.50px;">Comments</span>
<div class="cb" style="left:664px;top:183px;width:80px;height:24px;"><i></i><b></b></div>
<span class="t" style="left:667px;top:188px;letter-spacing:0.08px;">Both</span>
<div class="ta" style="left:750px;top:158px;width:219px;height:69px;"></div>
<svg style="left:949px;top:160px" width="18" height="18" viewBox="0 0 18 18"><path d="M10.2 11L14.8 15.6" stroke="#5a58a0" stroke-width="2.6" stroke-linecap="round"/><path d="M11 10.4L15.6 15" stroke="#ffa22e" stroke-width="2" stroke-linecap="round"/><circle cx="6.6" cy="6.5" r="5" fill="#55506a" opacity=".55"/><circle cx="6.9" cy="6.2" r="4.5" fill="#c6eafe" stroke="#8684b8" stroke-width=".9"/><circle cx="6.4" cy="6" r="2.4" fill="#eefaff" opacity=".85"/></svg>
<div style="left:122px;top:241px;width:885px;height:39px;border:1px solid #b8b8b8"></div>
<div style="left:127px;top:238px;width:31px;height:10px;background:#fff"></div>
<span class="t" style="left:129px;top:235px;font-weight:bold;color:#111;letter-spacing:-0.25px">Filter</span>
<span class="t" style="left:145px;top:253px;letter-spacing:0.16px;">Date</span>
<div style="left:187px;top:250px;width:68px;height:23px;background:#fff;border:1px solid #7a8a99;border-right-color:#b8c4d0;border-bottom-color:#b8c4d0"></div>
<span class="t" style="left:196px;top:256px;letter-spacing:-0.33px;font-style:italic">/  /</span>
<div style="left:256px;top:250px;width:16px;height:24px;background:#eee;border:1px solid #d0d8e0;border-right-color:#7a8a99;border-bottom-color:#7a8a99"></div>
<div style="left:260px;top:260px;width:0px;height:0px;border:4px solid transparent;border-top:4px solid #5a6a7a;border-bottom:0"></div>
<div style="left:277px;top:250px;width:61px;height:23px;background:#fff;border:1px solid #7a8a99;border-right-color:#b8c4d0;border-bottom-color:#b8c4d0"></div>
<div style="left:342px;top:250px;width:68px;height:23px;background:#fff;border:1px solid #7a8a99;border-right-color:#b8c4d0;border-bottom-color:#b8c4d0"></div>
<span class="t" style="left:351px;top:256px;letter-spacing:-0.33px;font-style:italic">/  /</span>
<div style="left:411px;top:250px;width:16px;height:24px;background:#eee;border:1px solid #d0d8e0;border-right-color:#7a8a99;border-bottom-color:#7a8a99"></div>
<div style="left:415px;top:260px;width:0px;height:0px;border:4px solid transparent;border-top:4px solid #5a6a7a;border-bottom:0"></div>
<div style="left:432px;top:250px;width:61px;height:23px;background:#fff;border:1px solid #7a8a99;border-right-color:#b8c4d0;border-bottom-color:#b8c4d0"></div>
<div class="ck" style="left:497px;top:256px;width:12px;height:12px;"></div>
<span class="t" style="left:514px;top:256px;letter-spacing:-0.07px;">Apply Date</span>
<div class="ck" style="left:627px;top:256px;width:12px;height:12px;"></div>
<span class="t" style="left:644px;top:256px;letter-spacing:0.23px;">Deleted</span>
<div class="ck" style="left:757px;top:256px;width:12px;height:12px;"></div>
<span class="t" style="left:774px;top:256px;letter-spacing:0.13px;">Filled &amp; Returned</span>
<svg style="left:758px;top:257px" width="10" height="10" viewBox="0 0 10 10"><path d="M2.9 4.2L2.9 8.4" stroke="#111" stroke-width="1.9" fill="none"/><path d="M3.4 8L8.7 2.3" stroke="#111" stroke-width="1.7" fill="none"/></svg>
<span class="t" style="left:140px;top:295px;">View</span>
<div class="cb" style="left:182px;top:291px;width:140px;height:24px;"><i></i><b></b></div>
<span class="t" style="left:185px;top:296px;letter-spacing:0.03px;">As on Order</span>
<div style="left:115px;top:323px;width:898px;height:356px;border:1px solid #7a8a99;background:#eee"></div>
<div style="left:116px;top:344px;width:879px;height:317px;background:#fff;overflow:hidden"><div style="left:0px;top:18px;width:879px;height:1px;background:#c47a48"></div><div class="ck" style="left:1px;top:3px;width:12px;height:12px;"></div><span class="t" style="left:96px;top:3px;letter-spacing:0.16px;color:#000">Rent</span><span class="t" style="left:176px;top:3px;letter-spacing:-0.03px;color:#000">JBLSUBWOOFER</span><span class="t" style="left:520px;top:3px;letter-spacing:0.04px;color:#000">- JBLSUB</span><span class="t" style="left:818px;top:3px;width:60px;text-align:right;color:#000">2</span><div style="left:0px;top:19px;width:879px;height:18px;background:#fc9a49"></div><div style="left:0px;top:37px;width:879px;height:1px;background:#c47a48"></div><div class="ck o" style="left:1px;top:22px;width:12px;height:12px;"></div><span class="t" style="left:16px;top:22px;letter-spacing:0.28px;color:#000">Repair</span><span class="t" style="left:96px;top:22px;letter-spacing:0.16px;color:#000">Rent</span><span class="t" style="left:176px;top:22px;letter-spacing:-0.03px;color:#000">JBLSUBWOOFER</span><span class="t" style="left:333px;top:22px;letter-spacing:-0.04px;color:#000">ASSET-236</span><span class="t" style="left:528px;top:22px;letter-spacing:0.11px;color:#000">JBLSUB</span><span class="t" style="left:818px;top:22px;width:60px;text-align:right;color:#000">1</span><div style="left:0px;top:56px;width:879px;height:1px;background:#c47a48"></div><div class="ck" style="left:1px;top:41px;width:12px;height:12px;"></div><span class="t" style="left:16px;top:41px;letter-spacing:-0.11px;color:#000">Out</span><span class="t" style="left:96px;top:41px;letter-spacing:0.16px;color:#000">Rent</span><span class="t" style="left:176px;top:41px;letter-spacing:-0.03px;color:#000">JBLSUBWOOFER</span><span class="t" style="left:333px;top:41px;letter-spacing:-0.04px;color:#000">ASSET-237</span><span class="t" style="left:528px;top:41px;letter-spacing:0.11px;color:#000">JBLSUB</span><span class="t" style="left:818px;top:41px;width:60px;text-align:right;color:#000">1</span><div style="left:0px;top:75px;width:879px;height:1px;background:#c47a48"></div><div class="ck" style="left:1px;top:60px;width:12px;height:12px;"></div><span class="t" style="left:96px;top:60px;letter-spacing:0.16px;color:#000">Rent</span><span class="t" style="left:176px;top:60px;letter-spacing:0.10px;color:#000">JBLPOUCHES</span><span class="t" style="left:520px;top:60px;letter-spacing:0.05px;color:#000">- JBLPOUCHES</span><span class="t" style="left:818px;top:60px;width:60px;text-align:right;color:#000">2</span><div style="left:0px;top:76px;width:879px;height:18px;background:#fc9a49"></div><div style="left:0px;top:94px;width:879px;height:1px;background:#c47a48"></div><div class="ck o" style="left:1px;top:79px;width:12px;height:12px;"></div><span class="t" style="left:16px;top:79px;letter-spacing:0.33px;color:#000">Lost</span><span class="t" style="left:96px;top:79px;letter-spacing:0.16px;color:#000">Rent</span><span class="t" style="left:176px;top:79px;letter-spacing:0.10px;color:#000">JBLPOUCHES</span><span class="t" style="left:333px;top:79px;letter-spacing:0.14px;color:#000">JBLPOUCHES#3</span><span class="t" style="left:528px;top:79px;letter-spacing:0.10px;color:#000">JBLPOUCHES</span><span class="t" style="left:818px;top:79px;width:60px;text-align:right;color:#000">1</span><div style="left:0px;top:113px;width:879px;height:1px;background:#c47a48"></div><div class="ck" style="left:1px;top:98px;width:12px;height:12px;"></div><span class="t" style="left:16px;top:98px;letter-spacing:-0.11px;color:#000">Out</span><span class="t" style="left:96px;top:98px;letter-spacing:0.16px;color:#000">Rent</span><span class="t" style="left:176px;top:98px;letter-spacing:0.10px;color:#000">JBLPOUCHES</span><span class="t" style="left:333px;top:98px;letter-spacing:0.14px;color:#000">JBLPOUCHES#4</span><span class="t" style="left:528px;top:98px;letter-spacing:0.10px;color:#000">JBLPOUCHES</span><span class="t" style="left:818px;top:98px;width:60px;text-align:right;color:#000">1</span><div style="left:0px;top:132px;width:879px;height:1px;background:#c47a48"></div><div class="ck" style="left:1px;top:117px;width:12px;height:12px;"></div><span class="t" style="left:96px;top:117px;letter-spacing:0.16px;color:#000">Rent</span><span class="t" style="left:176px;top:117px;letter-spacing:0.13px;color:#000">JBLHS-4/4D</span><span class="t" style="left:520px;top:117px;letter-spacing:0.12px;color:#000">- JBL High Sound-4/4D</span><span class="t" style="left:818px;top:117px;width:60px;text-align:right;color:#000">2</span><div style="left:0px;top:151px;width:879px;height:1px;background:#c47a48"></div><div class="ck" style="left:1px;top:136px;width:12px;height:12px;"></div><span class="t" style="left:16px;top:136px;letter-spacing:-0.11px;color:#000">Out</span><span class="t" style="left:96px;top:136px;letter-spacing:0.16px;color:#000">Rent</span><span class="t" style="left:176px;top:136px;letter-spacing:0.13px;color:#000">JBLHS-4/4D</span><span class="t" style="left:333px;top:136px;letter-spacing:0.24px;color:#000">JBLHS44D013</span><span class="t" style="left:528px;top:136px;letter-spacing:0.15px;color:#000">JBL High Sound-4/4D</span><span class="t" style="left:818px;top:136px;width:60px;text-align:right;color:#000">1</span><div style="left:0px;top:152px;width:879px;height:18px;background:#fc9a49"></div><div style="left:0px;top:170px;width:879px;height:1px;background:#c47a48"></div><div class="ck o" style="left:1px;top:155px;width:12px;height:12px;"></div><span class="t" style="left:16px;top:155px;letter-spacing:0.33px;color:#000">Lost</span><span class="t" style="left:96px;top:155px;letter-spacing:0.16px;color:#000">Rent</span><span class="t" style="left:176px;top:155px;letter-spacing:0.13px;color:#000">JBLHS-4/4D</span><span class="t" style="left:333px;top:155px;letter-spacing:0.24px;color:#000">JBLHS44D014</span><span class="t" style="left:528px;top:155px;letter-spacing:0.15px;color:#000">JBL High Sound-4/4D</span><span class="t" style="left:818px;top:155px;width:60px;text-align:right;color:#000">1</span><div style="left:0px;top:189px;width:879px;height:1px;background:#c47a48"></div><div class="ck" style="left:1px;top:174px;width:12px;height:12px;"></div><span class="t" style="left:96px;top:174px;letter-spacing:0.16px;color:#000">Rent</span><span class="t" style="left:176px;top:174px;letter-spacing:0.19px;color:#000">JBLHS21</span><span class="t" style="left:520px;top:174px;letter-spacing:0.11px;color:#000">- JBLHS21</span><span class="t" style="left:818px;top:174px;width:60px;text-align:right;color:#000">2</span><div style="left:0px;top:190px;width:879px;height:18px;background:#fc9a49"></div><div style="left:0px;top:208px;width:879px;height:1px;background:#c47a48"></div><div class="ck o" style="left:1px;top:193px;width:12px;height:12px;"></div><span class="t" style="left:16px;top:193px;letter-spacing:0.28px;color:#000">Repair</span><span class="t" style="left:96px;top:193px;letter-spacing:0.16px;color:#000">Rent</span><span class="t" style="left:176px;top:193px;letter-spacing:0.19px;color:#000">JBLHS21</span><span class="t" style="left:333px;top:193px;letter-spacing:0.20px;color:#000">JBLHS21-03</span><span class="t" style="left:528px;top:193px;letter-spacing:0.19px;color:#000">JBLHS21</span><span class="t" style="left:818px;top:193px;width:60px;text-align:right;color:#000">1</span><div style="left:0px;top:227px;width:879px;height:1px;background:#c47a48"></div><div class="ck" style="left:1px;top:212px;width:12px;height:12px;"></div><span class="t" style="left:16px;top:212px;letter-spacing:-0.11px;color:#000">Out</span><span class="t" style="left:96px;top:212px;letter-spacing:0.16px;color:#000">Rent</span><span class="t" style="left:176px;top:212px;letter-spacing:0.19px;color:#000">JBLHS21</span><span class="t" style="left:333px;top:212px;letter-spacing:0.20px;color:#000">JBLHS21-04</span><span class="t" style="left:528px;top:212px;letter-spacing:0.19px;color:#000">JBLHS21</span><span class="t" style="left:818px;top:212px;width:60px;text-align:right;color:#000">1</span><div style="left:0px;top:246px;width:879px;height:1px;background:#c47a48"></div><div class="ck" style="left:1px;top:231px;width:12px;height:12px;"></div><span class="t" style="left:96px;top:231px;letter-spacing:0.16px;color:#000">Rent</span><span class="t" style="left:176px;top:231px;letter-spacing:-0.03px;color:#000">JBLSUBWOOFERS</span><span class="t" style="left:520px;top:231px;letter-spacing:-0.05px;color:#000">- JBLSUBWOOFERS</span><span class="t" style="left:818px;top:231px;width:60px;text-align:right;color:#000">2</span><div style="left:0px;top:265px;width:879px;height:1px;background:#c47a48"></div><div class="ck" style="left:1px;top:250px;width:12px;height:12px;"></div><span class="t" style="left:16px;top:250px;letter-spacing:-0.11px;color:#000">Out</span><span class="t" style="left:96px;top:250px;letter-spacing:0.16px;color:#000">Rent</span><span class="t" style="left:176px;top:250px;letter-spacing:-0.03px;color:#000">JBLSUBWOOFERS</span><span class="t" style="left:333px;top:250px;letter-spacing:0.02px;color:#000">JBLSUBWOOFERS#1</span><span class="t" style="left:528px;top:250px;letter-spacing:-0.03px;color:#000">JBLSUBWOOFERS</span><span class="t" style="left:818px;top:250px;width:60px;text-align:right;color:#000">1</span><div style="left:0px;top:284px;width:879px;height:1px;background:#c47a48"></div><div class="ck" style="left:1px;top:269px;width:12px;height:12px;"></div><span class="t" style="left:16px;top:269px;letter-spacing:-0.11px;color:#000">Out</span><span class="t" style="left:96px;top:269px;letter-spacing:0.16px;color:#000">Rent</span><span class="t" style="left:176px;top:269px;letter-spacing:-0.03px;color:#000">JBLSUBWOOFERS</span><span class="t" style="left:333px;top:269px;letter-spacing:0.02px;color:#000">JBLSUBWOOFERS#4</span><span class="t" style="left:528px;top:269px;letter-spacing:-0.03px;color:#000">JBLSUBWOOFERS</span><span class="t" style="left:818px;top:269px;width:60px;text-align:right;color:#000">1</span><div style="left:0px;top:303px;width:879px;height:1px;background:#c47a48"></div><div class="ck" style="left:1px;top:288px;width:12px;height:12px;"></div><span class="t" style="left:96px;top:288px;letter-spacing:0.16px;color:#000">Rent</span><span class="t" style="left:176px;top:288px;color:#000">JBLMSPKR-LX1000</span><span class="t" style="left:520px;top:288px;letter-spacing:-0.03px;color:#000">- JBLM Speaker - LX 100</span><span class="t" style="left:818px;top:288px;width:60px;text-align:right;color:#000">2</span><div style="left:0px;top:322px;width:879px;height:1px;background:#c47a48"></div><div class="ck" style="left:1px;top:307px;width:12px;height:12px;"></div><span class="t" style="left:16px;top:307px;letter-spacing:-0.11px;color:#000">Out</span><span class="t" style="left:96px;top:307px;letter-spacing:0.16px;color:#000">Rent</span><span class="t" style="left:176px;top:307px;color:#000">JBLMSPKR-LX1000</span><span class="t" style="left:333px;top:307px;letter-spacing:0.07px;color:#000">JBLMSPKR1000LX003</span><span class="t" style="left:528px;top:307px;color:#000">JBLM Speaker - LX 100</span><span class="t" style="left:818px;top:307px;width:60px;text-align:right;color:#000">1</span><div style="left:14px;top:0px;width:1px;height:317px;background:#c47a48"></div><div style="left:94px;top:0px;width:1px;height:317px;background:#c47a48"></div><div style="left:174px;top:0px;width:1px;height:317px;background:#c47a48"></div><div style="left:331px;top:0px;width:1px;height:317px;background:#c47a48"></div><div style="left:514px;top:0px;width:1px;height:317px;background:#c47a48"></div><div style="left:814px;top:0px;width:1px;height:317px;background:#c47a48"></div><div style="left:15px;top:19px;width:79px;height:18px;border:1px solid #f00"></div></div>
<div class="hc" style="left:116px;top:324px;width:15px;height:20px;"></div>
<span class="t ht" style="left:116px;top:328px;width:15px;text-align:center;letter-spacing:0.33px;">C</span>
<div class="hc" style="left:131px;top:324px;width:80px;height:20px;"></div>
<span class="t ht" style="left:131px;top:328px;width:80px;text-align:center;letter-spacing:0.16px;">Status</span>
<div class="hc" style="left:211px;top:324px;width:80px;height:20px;"></div>
<span class="t ht" style="left:211px;top:328px;width:80px;text-align:center;letter-spacing:-0.06px;">Action</span>
<div class="hc" style="left:291px;top:324px;width:157px;height:20px;"></div>
<span class="t ht" style="left:291px;top:328px;width:157px;text-align:center;letter-spacing:0.03px;">Product ID</span>
<div class="hc" style="left:448px;top:324px;width:183px;height:20px;"></div>
<span class="t ht" style="left:448px;top:328px;width:183px;text-align:center;letter-spacing:0.08px;">Asset ID</span>
<div class="hc" style="left:631px;top:324px;width:300px;height:20px;"></div>
<span class="t ht" style="left:631px;top:328px;width:300px;text-align:center;letter-spacing:0.27px;">Description</span>
<div class="hc" style="left:931px;top:324px;width:65px;height:20px;"></div>
<span class="t ht" style="left:931px;top:328px;width:65px;text-align:center;letter-spacing:0.14px;">Ordered</span>
<div style="left:995px;top:324px;width:17px;height:20px;background:#eee;border-left:1px solid #fff;border-top:1px solid #fff"></div>
<div style="left:995px;top:344px;width:17px;height:317px;background:#fff"></div>
<div style="left:995px;top:344px;width:16px;height:317px;background:#eee;border-left:1px solid #7a8a99;border-right:1px solid #7a8a99;box-shadow:inset 1px 0 0 #dfe8f3"></div>
<div style="left:995px;top:344px;width:16px;height:15px;background:#eee;border:1px solid #7a8a99;border-bottom-color:#dfe8f3;box-shadow:inset 1px 1px 0 #fff"></div>
<div style="left:1000px;top:350px;width:0px;height:0px;border:4px solid transparent;border-bottom:4px solid #2e2e2e;border-top:0"></div>
<div style="left:995px;top:359px;width:16px;height:159px;background:linear-gradient(90deg,#e59a62 0,#e59a62 1px,#f5c9a9 2px,#e8a365 100%);border:1px solid #ffc400"></div>
<div style="left:999px;top:436px;width:9px;height:1px;background:#8d8aa0"></div>
<div style="left:1000px;top:437px;width:9px;height:1px;background:#f8dcc6"></div>
<div style="left:999px;top:438px;width:9px;height:1px;background:#8d8aa0"></div>
<div style="left:1000px;top:439px;width:9px;height:1px;background:#f8dcc6"></div>
<div style="left:999px;top:440px;width:9px;height:1px;background:#8d8aa0"></div>
<div style="left:1000px;top:441px;width:9px;height:1px;background:#f8dcc6"></div>
<div style="left:995px;top:644px;width:16px;height:16px;background:#eee;border:1px solid #7a8a99;box-shadow:inset 1px 1px 0 #fff"></div>
<div style="left:1000px;top:651px;width:0px;height:0px;border:4px solid transparent;border-top:4px solid #2e2e2e;border-bottom:0"></div>
<div style="left:116px;top:661px;width:879px;height:17px;background:#eee;border-top:1px solid #7a8a99;border-bottom:1px solid #fff"></div>
<div style="left:995px;top:661px;width:17px;height:17px;background:#eee"></div>
<div style="left:116px;top:661px;width:15px;height:16px;background:#eee;border:1px solid #7a8a99;border-left:0;border-right-color:#dfe8f3;box-shadow:inset 1px 1px 0 #fff"></div>
<div style="left:122px;top:666px;width:0px;height:0px;border:4px solid transparent;border-right:4px solid #2e2e2e;border-left:0"></div>
<div style="left:131px;top:661px;width:415px;height:16px;background:linear-gradient(#e59a62 0,#e59a62 1px,#f5c9a9 2px,#e8a365 100%);border:1px solid #ffc400"></div>
<div style="left:335px;top:665px;width:1px;height:8px;background:#8d8aa0"></div>
<div style="left:336px;top:666px;width:1px;height:8px;background:#f8dcc6"></div>
<div style="left:337px;top:665px;width:1px;height:8px;background:#8d8aa0"></div>
<div style="left:338px;top:666px;width:1px;height:8px;background:#f8dcc6"></div>
<div style="left:339px;top:665px;width:1px;height:8px;background:#8d8aa0"></div>
<div style="left:340px;top:666px;width:1px;height:8px;background:#f8dcc6"></div>
<div style="left:978px;top:661px;width:16px;height:16px;background:#eee;border:1px solid #7a8a99;box-shadow:inset 1px 1px 0 #fff"></div>
<div style="left:985px;top:666px;width:0px;height:0px;border:4px solid transparent;border-left:4px solid #2e2e2e;border-right:0"></div>
<div style="left:113px;top:692px;width:903px;height:24px;background:#fff;border:1px solid #c0c0c0;border-top:2px solid #808080;border-left:2px solid #808080"></div>
</body></html>
